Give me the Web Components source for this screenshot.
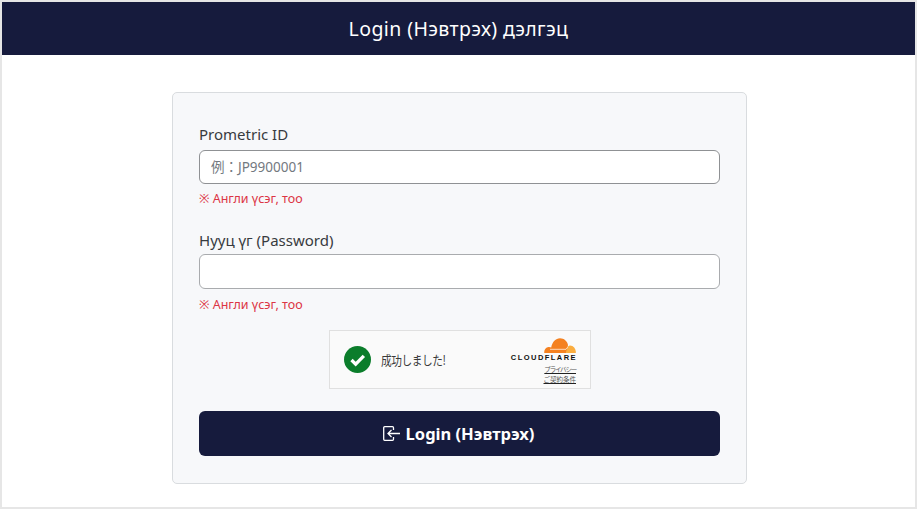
<!DOCTYPE html>
<html>
<head>
<meta charset="utf-8">
<title>Login</title>
<style>
  html, body { margin: 0; height: 100%; background: #fff; }
  body { font-family: "Noto Sans", "Noto Sans CJK JP", sans-serif; color: #212529; }
</style>
</head>
<body>
<login-page>
  <page-header>Login (Нэвтрэх) дэлгэц</page-header>
  <login-card>
    <form-field label="Prometric ID" placeholder="例：JP9900001" hint="※ Англи үсэг, тоо"></form-field>
    <form-field class="password" label="Нууц үг (Password)" hint="※ Англи үсэг, тоо"></form-field>
    <captcha-box></captcha-box>
    <login-button>Login (Нэвтрэх)</login-button>
  </login-card>
</login-page>

<script>
class LoginPage extends HTMLElement {
  constructor() {
    super();
    this.attachShadow({ mode: "open" });
    this.shadowRoot.innerHTML = `
      <style>
        :host {
          display: flex;
          flex-direction: column;
          box-sizing: border-box;
          width: 917px;
          height: 509px;
          border: 2px solid #e6e6e6;
          overflow: hidden;
        }
      </style>
      <slot></slot>
    `;
  }
}

class PageHeader extends HTMLElement {
  constructor() {
    super();
    this.attachShadow({ mode: "open" });
    this.shadowRoot.innerHTML = `
      <style>
        :host {
          display: flex;
          align-items: center;
          justify-content: center;
          flex: none;
          height: 53px;
          background: #161b3d;
          color: #fff;
          font-size: 19.5px;
          letter-spacing: 0.4px;
        }
      </style>
      <slot></slot>
    `;
  }
}

class LoginCard extends HTMLElement {
  constructor() {
    super();
    this.attachShadow({ mode: "open" });
    this.shadowRoot.innerHTML = `
      <style>
        :host {
          display: flex;
          flex-direction: column;
          box-sizing: border-box;
          width: 575px;
          height: 392px;
          margin: 37px 0 0 170px;
          padding: 29px 26px 0;
          background: #f7f8fa;
          border: 1px solid #d9dcdf;
          border-radius: 5px;
        }
      </style>
      <slot></slot>
    `;
  }
}

class FormField extends HTMLElement {
  constructor() {
    super();
    this.attachShadow({ mode: "open" });
  }

  connectedCallback() {
    const label = this.getAttribute("label") || "";
    const placeholder = this.getAttribute("placeholder") || "";
    const hint = this.getAttribute("hint") || "";
    this.shadowRoot.innerHTML = `
      <style>
        :host {
          display: block;
          margin-bottom: 20px;
        }
        :host(.password) {
          margin-bottom: 16px;
        }
        label {
          display: block;
          height: 28px;
          line-height: 24px;
          font-size: 15px;
          color: #373b40;
        }
        :host(.password) label {
          height: 26px;
        }
        input {
          display: block;
          box-sizing: border-box;
          width: 100%;
          height: 34px;
          padding: 0 11px;
          background: #fff;
          border: 1px solid #8f9194;
          border-radius: 6px;
          font: inherit;
          font-size: 13.5px;
          outline: none;
        }
        :host(.password) input {
          height: 35px;
          border-color: #a9abae;
        }
        input::placeholder {
          color: #73797f;
          opacity: 1;
        }
        .hint {
          margin-top: 6px;
          line-height: 18px;
          font-size: 12.5px;
          color: #dc3545;
        }
        :host(.password) .hint {
          margin-top: 7px;
        }
      </style>
      <label>${label}</label>
      <input type="text" placeholder="${placeholder}">
      <div class="hint">${hint}</div>
    `;
  }
}

class CaptchaBox extends HTMLElement {
  constructor() {
    super();
    this.attachShadow({ mode: "open" });
    this.shadowRoot.innerHTML = `
      <style>
        :host {
          display: flex;
          align-items: center;
          box-sizing: border-box;
          width: 262px;
          height: 59px;
          margin-left: 130px;
          padding: 0 14px 0 14px;
          background: #fafafa;
          border: 1px solid #e0e0e0;
          color: #3a3a3a;
        }
        svg { display: block; flex: none; }
        .msg {
          flex: 1;
          margin-left: 10px;
          font-family: "Noto Sans CJK JP", sans-serif;
          font-size: 13px;
          letter-spacing: -0.5px;
          transform: scaleX(0.82);
          transform-origin: left center;
          white-space: nowrap;
        }
        .brand {
          display: flex;
          flex-direction: column;
          align-items: flex-end;
          margin-top: 3px;
        }
        .word {
          margin-top: 1px;
          line-height: 8px;
          font-family: "Liberation Sans", sans-serif;
          font-size: 7.5px;
          font-weight: 700;
          letter-spacing: 1.45px;
          margin-right: -1px;
          color: #111;
        }
        .links {
          margin-top: 3px;
          font-family: "Noto Sans CJK JP", sans-serif;
          font-size: 6.5px;
          line-height: 9.5px;
          text-align: right;
          color: #555;
        }
        .links span {
          display: block;
          text-decoration: underline;
          text-decoration-color: #222;
        }
        .links .p { letter-spacing: -1.2px; }
      </style>
      <svg width="27" height="27" viewBox="0 0 28 28">
        <circle cx="14" cy="14" r="14" fill="#0b7d2b"/>
        <path d="M7.800 14.500l4.300 4.300L20.600 10.200" fill="none" stroke="#fff" stroke-width="3.400"/>
      </svg>
      <div class="msg">成功しました!</div>
      <div class="brand">
        <svg width="32" height="15" viewBox="0 0 32 15">
          <path d="M22.500 15H.3c-.5-2.800 1.300-5.700 4.300-6 1-.1 1.800.1 2.600.6C8.200 3.800 11.800.3 16 .3c4 0 7.300 2.900 8 6.700z" fill="#f48120"/>
          <path d="M22 15c.5-2.900 1.500-7.500 4-7.500 3.300 0 6 3.100 5.900 7.500z" fill="#faad3f"/>
          <path d="M6 11.300h16l1.500-2" fill="none" stroke="#fff" stroke-width=".7"/>
        </svg>
        <div class="word">CLOUDFLARE</div>
        <div class="links"><span class="p">プライバシー</span><span>ご契約条件</span></div>
      </div>
    `;
  }
}

class LoginButton extends HTMLElement {
  constructor() {
    super();
    this.attachShadow({ mode: "open" });
    this.shadowRoot.innerHTML = `
      <style>
        :host {
          display: flex;
          align-items: center;
          justify-content: center;
          gap: 6px;
          height: 45px;
          margin-top: 22px;
          padding-right: 2px;
          background: #161b3d;
          border-radius: 6px;
          color: #fff;
          font-size: 16.5px;
          font-weight: 700;
          cursor: pointer;
        }
        svg { display: block; }
      </style>
      <svg width="17" height="15" viewBox="0 0 17 15" fill="none" stroke="#fff" stroke-width="1.300">
        <path d="M10.500 4V1.700a1 1 0 0 0-1-1H1.700a1 1 0 0 0-1 1v11.600a1 1 0 0 0 1 1h7.800a1 1 0 0 0 1-1V11"/>
        <path d="M17 7.500H5M8.500 4L5 7.500 8.500 11"/>
      </svg>
      <slot></slot>
    `;
  }
}

customElements.define("login-page", LoginPage);
customElements.define("page-header", PageHeader);
customElements.define("login-card", LoginCard);
customElements.define("form-field", FormField);
customElements.define("captcha-box", CaptchaBox);
customElements.define("login-button", LoginButton);
</script>
</body>
</html>
